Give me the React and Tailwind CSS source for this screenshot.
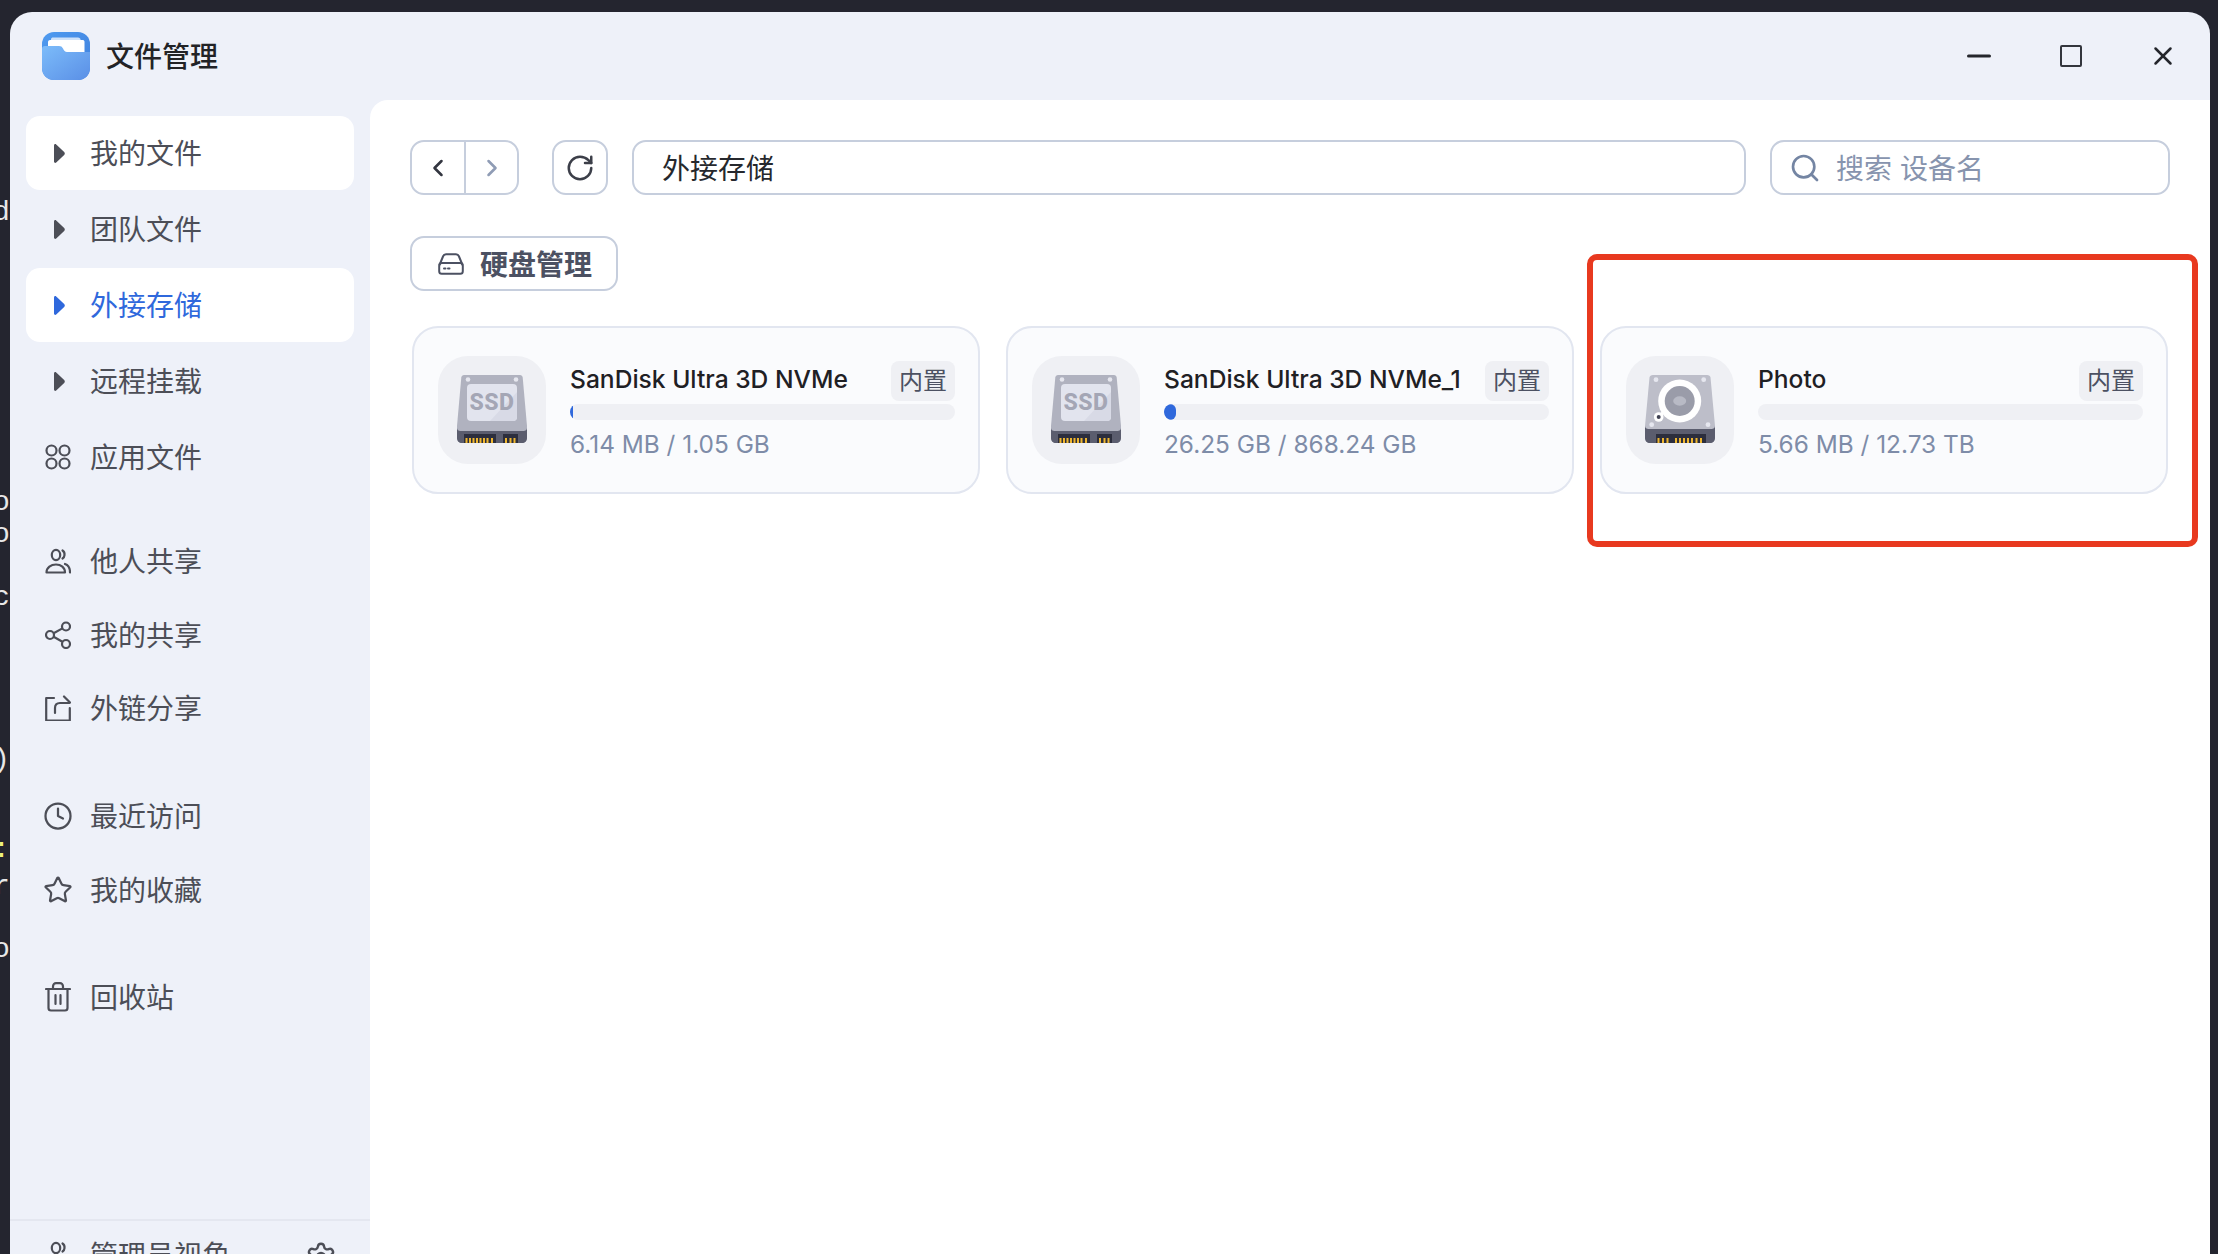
import React from 'react';
import { ChevronLeft, ChevronRight, RotateCw, Search, Clock, Star, Minus, X, Settings } from 'lucide-react';

const navStroke = '#4c4e57';

// Sidebar icons, all drawn on a 26px box
const AppsIcon = () => (
  <svg width="26" height="26" viewBox="0 0 26 26" fill="none" stroke={navStroke} strokeWidth="2.2">
    <circle cx="6.500" cy="6.500" r="5" />
    <circle cx="19.500" cy="6.500" r="5" />
    <circle cx="6.500" cy="19.500" r="5" />
    <circle cx="19.500" cy="19.500" r="5" />
  </svg>
);

const UsersIcon = () => (
  <svg width="26" height="26" viewBox="0 0 26 26" fill="none" stroke={navStroke} strokeWidth="2.2" strokeLinecap="round" strokeLinejoin="round">
    <ellipse cx="11" cy="7" rx="4.2" ry="5.2" />
    <path d="M17.5 2.5c1.6 1 2.2 2.8 2 4.6-.1 1.4-.8 2.6-2 3.4" />
    <path d="M1.5 24.5c0-5 4.5-8 9.5-8s9 3 9 8z" />
    <path d="M20 16c3 1 5 4 5 8.5" />
  </svg>
);

const ShareIcon = () => (
  <svg width="26" height="28" viewBox="0 0 26 28" fill="none" stroke={navStroke} strokeWidth="2.2">
    <circle cx="21" cy="5.5" r="4" />
    <circle cx="5" cy="14" r="4" />
    <circle cx="21" cy="23" r="4" />
    <path d="M8.6 12.2l8.8-4.8M8.6 15.8l8.8 5" />
  </svg>
);

const LinkShareIcon = () => (
  <svg width="26" height="26" viewBox="0 0 26 26" fill="none" stroke={navStroke} strokeWidth="2.2" strokeLinecap="round" strokeLinejoin="round">
    <path d="M9 3H1.2v22.5h23.6V13" />
    <path d="M10 18v-5c0-3 2-5 5-5h9.5M19 1.5L25 7.5" />
  </svg>
);

const TrashIcon = () => (
  <svg width="26" height="30" viewBox="0 0 26 30" fill="none" stroke={navStroke} strokeWidth="2.2" strokeLinecap="round" strokeLinejoin="round">
    <path d="M1 7h24M8 7V4.5C8 2.5 9.5 1.2 11 1.2h4c1.5 0 3 1.300 3 3.300V7" />
    <path d="M3.500 7v19c0 1.500 1 2.500 2.500 2.500h14c1.500 0 2.500-1 2.500-2.500V7" />
    <path d="M10.500 13v9M15.500 13v9" />
  </svg>
);

const Caret = ({ color }) => (
  <svg width="11" height="19" viewBox="0 0 11 19" fill={color}>
    <path d="M0 1.500C0 .300 1.200-.400 2.200.400l8 7.600c.800.800.800 2.100 0 2.900l-8 7.700C1.200 19.400 0 18.700 0 17.500z" />
  </svg>
);

const FolderLogo = () => (
  <svg width="48" height="48" viewBox="0 0 48 48">
    <defs>
      <linearGradient id="folderBack" x1="0" y1="0" x2="1" y2="1">
        <stop offset="0" stopColor="#4f9bf0" />
        <stop offset="1" stopColor="#3f7fdc" />
      </linearGradient>
      <linearGradient id="folderFront" x1="0" y1="0" x2="1" y2="1">
        <stop offset="0" stopColor="#7cbcfa" />
        <stop offset="1" stopColor="#5a8fe6" />
      </linearGradient>
    </defs>
    <rect width="48" height="48" rx="12" fill="url(#folderBack)" />
    <path d="M9 7.500C9 6 10 5.500 11 5.500h25c1.500 0 2.500 1 2.500 2v8H9z" fill="#cfe2f9" />
    <path d="M6 10c0-1.200 1-2 2-2h33c1 0 1.500 1 1.500 2v12H6z" fill="#ffffff" />
    <path d="M0 17c0-2 1-3 3-3h14c2 0 3 .8 4 2.500 1 2 2 3.500 4 3.500h23v16c0 7-5 12-12 12H12C5 48 0 43 0 36z" fill="url(#folderFront)" />
  </svg>
);

const SsdIcon = () => (
  <svg width="108" height="108" viewBox="0 0 108 108">
    <path d="M26 19h56c1.500 0 2.500 1 2.700 2.500L89 70v11c0 3.500-2 6-5 6H24c-3 0-5-2.500-5-6V70l4.300-48.500C23.500 20 24.500 19 26 19z" fill="#b0b2bf" />
    <path d="M19 72c0 2 1.500 3 3.500 3h63c2 0 3.500-1 3.500-3v10c0 3-2 5-5 5H24c-3 0-5-2-5-5z" fill="#5b5d6e" />
    <circle cx="30" cy="23.500" r="2.300" fill="#e6e7ef" />
    <circle cx="78" cy="23.500" r="2.300" fill="#e6e7ef" />
    <rect x="29" y="28" width="50" height="37" rx="4" fill="#e2e4ee" />
    <path d="M52 65L79 36v25c0 2.500-1.500 4-4 4z" fill="#d8dae6" />
    <text x="54" y="53.500" textAnchor="middle" fontFamily="Roboto, sans-serif" fontWeight="800" fontSize="23" letterSpacing="0.5" fill="#a4a6b5">SSD</text>
    <rect x="26" y="78" width="32" height="9" fill="#2c2e3d" />
    <rect x="65" y="78" width="15" height="9" fill="#2c2e3d" />
    <path d="M28.500 82v5M32 82v5M35.500 82v5M39 82v5M42.500 82v5M46 82v5M49.500 82v5M54 82v5M68 82v5M72.500 82v5M76.500 82v5" stroke="#eeb52f" strokeWidth="2" />
  </svg>
);

const HddIcon = () => (
  <svg width="108" height="108" viewBox="0 0 108 108">
    <path d="M27 19h54c2 0 3.300 1 3.500 2.500L89 70v11c0 3.500-2 6-5 6H24c-3 0-5-2.500-5-6V70l4.500-48.500C23.700 20 25 19 27 19z" fill="#bdbec9" />
    <path d="M19 70c0 2 1.500 3 3.500 3h63c2 0 3.500-1 3.500-3v12c0 3-2 5-5 5H24c-3 0-5-2-5-5z" fill="#5b5d6e" />
    <circle cx="30" cy="23.700" r="2.400" fill="#e6e7ef" />
    <circle cx="77.700" cy="23.700" r="2.400" fill="#e6e7ef" />
    <circle cx="25.700" cy="68.700" r="2.400" fill="#e6e7ef" />
    <circle cx="82" cy="68.700" r="2.400" fill="#e6e7ef" />
    <path d="M33 61l8-9" stroke="#ffffff" strokeWidth="3" />
    <circle cx="53.700" cy="45" r="21.500" fill="#ffffff" />
    <circle cx="53.700" cy="45" r="15" fill="#9a9ca9" />
    <ellipse cx="53.700" cy="45" rx="6.500" ry="4.700" fill="#b8bac5" />
    <circle cx="32.700" cy="61" r="4.800" fill="#ffffff" />
    <circle cx="32.700" cy="61" r="2" fill="#3f4152" />
    <rect x="30" y="78" width="50" height="9" fill="#2c2e3d" />
    <path d="M32.500 82v5M37 82v5M41.500 82v5M50 82v5M54 82v5M58 82v5M62 82v5M66 82v5M70.500 82v5M75 82v5" stroke="#eeb52f" strokeWidth="2" />
  </svg>
);

const DiskIcon = () => (
  <svg width="26" height="22" viewBox="0 0 26 22" fill="none" stroke="#4c5162" strokeWidth="2" strokeLinejoin="round">
    <path d="M1.500 12L5 3.500C5.500 2 6.500 1.200 8 1.200h10c1.500 0 2.500.8 3 2.300L24.500 12" />
    <rect x="1.200" y="10" width="23.600" height="10.800" rx="2.500" />
    <path d="M6 15.500h1.500M10 15.500h1.500" strokeLinecap="round" />
  </svg>
);

const groups = [
  {
    cls: 'gap-[2px]',
    items: [
      { label: '我的文件', caret: true, hover: true },
      { label: '团队文件', caret: true },
      { label: '外接存储', caret: true, active: true },
      { label: '远程挂载', caret: true },
      { label: '应用文件', icon: <AppsIcon /> },
    ],
  },
  {
    cls: 'mt-[30px] -space-y-[0.5px]',
    items: [
      { label: '他人共享', icon: <UsersIcon /> },
      { label: '我的共享', icon: <ShareIcon /> },
      { label: '外链分享', icon: <LinkShareIcon /> },
    ],
  },
  {
    cls: 'mt-[34px]',
    items: [
      { label: '最近访问', icon: <Clock size={30} strokeWidth={1.8} color={navStroke} /> },
      { label: '我的收藏', icon: <Star size={30} strokeWidth={1.8} color={navStroke} /> },
    ],
  },
  {
    cls: 'mt-[33px]',
    items: [{ label: '回收站', icon: <TrashIcon /> }],
  },
];

const drives = [
  { name: 'SanDisk Ultra 3D NVMe', size: '6.14 MB / 1.05 GB', used: 'w-[3px]', icon: <SsdIcon /> },
  { name: 'SanDisk Ultra 3D NVMe_1', size: '26.25 GB / 868.24 GB', used: 'w-[12px]', icon: <SsdIcon /> },
  { name: 'Photo', size: '5.66 MB / 12.73 TB', used: 'w-0', icon: <HddIcon /> },
];

// Bits of the terminal text showing behind the window
const edgeGlyphs = [
  { ch: 'd', cls: 'top-[198px] text-[#e8e8e8]' },
  { ch: 'o', cls: 'top-[488px] text-[#e8e8e8]' },
  { ch: 'o', cls: 'top-[520px] text-[#e8e8e8]' },
  { ch: 'c', cls: 'top-[583px] text-[#e8e8e8]' },
  { ch: ')', cls: 'top-[745px] text-[#e8e8e8]' },
  { ch: ':', cls: 'top-[835px] text-[#f1f27a]' },
  { ch: 'r', cls: 'top-[872px] text-[#e8e8e8]' },
  { ch: 'o', cls: 'top-[935px] text-[#e8e8e8]' },
];

const NavRow = ({ item }) => (
  <div className={`h-[74px] shrink-0 rounded-[14px] flex items-center ${item.hover || item.active ? 'bg-white' : ''}`}>
    <div className={`w-[64px] shrink-0 flex justify-center ${item.caret ? 'pl-[3px]' : ''}`}>
      {item.caret ? <Caret color={item.active ? '#2f68dc' : navStroke} /> : item.icon}
    </div>
    <span className={`pt-[2px] text-[28px] leading-none ${item.active ? 'text-[#2f68dc]' : 'text-[#4c4e57]'}`}>{item.label}</span>
  </div>
);

const DriveCard = ({ drive }) => (
  <div className="h-[168px] rounded-[26px] border-2 border-[#e2e6f0] bg-[#fafbfd] flex items-center pl-[24px] pr-[23px]">
    <div className="w-[108px] h-[108px] shrink-0 rounded-[30px] bg-[#eff0f4] flex items-center justify-center">
      {drive.icon}
    </div>
    <div className="flex-1 min-w-0 ml-[24px] flex flex-col">
      <div className="flex items-center justify-between h-[40px]">
        <span className="pb-[2px] text-[24.6px] font-medium leading-none text-[#1f2024] whitespace-nowrap">{drive.name}</span>
        <span className="w-[64px] h-[40px] shrink-0 rounded-[8px] bg-[#eff0f4] flex items-center justify-center text-[24px] leading-none text-[#4c5162]">内置</span>
      </div>
      <div className="h-[16px] mt-[3px] rounded-full bg-[#eff0f4] overflow-hidden">
        <div className={`h-full rounded-full bg-[#2f68dc] ${drive.used}`} />
      </div>
      <span className="mt-[8px] text-[24.4px] leading-[32px] text-[#7e8ca8] whitespace-nowrap">{drive.size}</span>
    </div>
  </div>
);

export default function App() {
  return (
    <div className="relative h-screen overflow-hidden bg-[#24252f] pl-[10px] pr-[8px] pt-[12px] font-['Inter','Noto_Sans_CJK_SC',sans-serif]">
      {edgeGlyphs.map((g, i) => (
        <span key={i} className={`absolute left-[-7px] text-[28px] leading-[30px] font-['Liberation_Mono',monospace] ${g.cls}`}>{g.ch}</span>
      ))}
      <span className="absolute left-[400px] top-[12px] text-[28px] leading-[30px] whitespace-pre text-[#c8c8c8] font-['Liberation_Mono',monospace]">l  f     l  f    l   f   l f  l</span>

      <div className="relative h-[1320px] rounded-t-[22px] bg-[#eef1f9] overflow-hidden flex flex-col">
        {/* title bar */}
        <div className="h-[88px] shrink-0 flex items-center">
          <div className="ml-[32px]"><FolderLogo /></div>
          <span className="ml-[16px] pt-[2px] text-[28px] font-medium leading-none text-[#222326]">文件管理</span>
          <div className="ml-auto flex items-center mr-[31px] gap-[60px] text-[#24262c]">
            <div className="w-[32px] flex justify-center"><Minus size={36} strokeWidth={2} className="shrink-0" /></div>
            <div className="w-[32px] flex justify-center">
              <div className="w-[22px] h-[22px] border-2 border-[#33363d] rounded-[2px]" />
            </div>
            <div className="w-[32px] flex justify-center"><X size={30} strokeWidth={2} /></div>
          </div>
        </div>

        <div className="flex-1 flex min-h-0">
          {/* sidebar */}
          <aside className="w-[360px] shrink-0 relative pt-[16px] px-[16px] flex flex-col">
            {groups.map((g, i) => (
              <div key={i} className={`flex flex-col ${g.cls}`}>
                {g.items.map((item) => <NavRow key={item.label} item={item} />)}
              </div>
            ))}
            <div className="absolute left-0 right-0 top-[1119px] border-t-2 border-[#e4e7f0] h-[80px] flex items-start pl-[16px] pt-[20px]">
              <div className="w-[64px] flex justify-center text-[#4c4e57]">
                <UsersIcon />
              </div>
              <span className="text-[28px] leading-[30px] text-[#4c4e57]">管理员视角</span>
              <div className="ml-auto mr-[33px] text-[#4c4e57]"><Settings size={32} strokeWidth={1.8} /></div>
            </div>
          </aside>

          {/* main panel */}
          <main className="flex-1 min-w-0 bg-white rounded-tl-[18px] pt-[40px] pl-[40px] pr-[40px]">
            <div className="flex items-center h-[55px]">
              <div className="w-[109px] h-[55px] shrink-0 rounded-[14px] border-2 border-[#c6cedd] flex">
                <div className="w-[54px] border-r-2 border-[#c6cedd] flex items-center justify-center text-[#333640]">
                  <ChevronLeft size={28} strokeWidth={2.2} />
                </div>
                <div className="flex-1 flex items-center justify-center text-[#8f9cb5]">
                  <ChevronRight size={28} strokeWidth={2.2} />
                </div>
              </div>
              <div className="w-[56px] h-[55px] ml-[33px] shrink-0 rounded-[14px] border-2 border-[#c6cedd] flex items-center justify-center text-[#3c3f49]">
                <RotateCw size={30} strokeWidth={2} />
              </div>
              <div className="w-[1114px] h-[55px] ml-[24px] shrink-0 rounded-[14px] border-2 border-[#c6cedd] flex items-center pl-[28px] pt-[2px] text-[28px] leading-none text-[#26282d]">
                外接存储
              </div>
              <div className="flex-1 h-[55px] ml-[24px] rounded-[14px] border-2 border-[#c6cedd] flex items-center pl-[17px] text-[28px] leading-none text-[#8794ae]">
                <Search size={32} strokeWidth={2} className="text-[#7485a3]" />
                <span className="ml-[15px] pt-[2px]">搜索 设备名</span>
              </div>
            </div>

            <div className="mt-[41px] w-[208px] h-[55px] rounded-[14px] border-2 border-[#c6cedd] flex items-center pl-[26px]">
              <DiskIcon />
              <span className="ml-[16px] pt-[2px] text-[28px] font-semibold leading-none text-[#4c5162]">硬盘管理</span>
            </div>

            <div className="mt-[35px] mx-[2px] grid grid-cols-3 gap-[26px]">
              {drives.map((d) => <DriveCard key={d.name} drive={d} />)}
            </div>
          </main>
        </div>
      </div>

      {/* red annotation frame */}
      <div className="absolute left-[1587px] top-[254px] w-[611px] h-[293px] rounded-[10px] border-[6px] border-[#e8391f]" />
    </div>
  );
}
